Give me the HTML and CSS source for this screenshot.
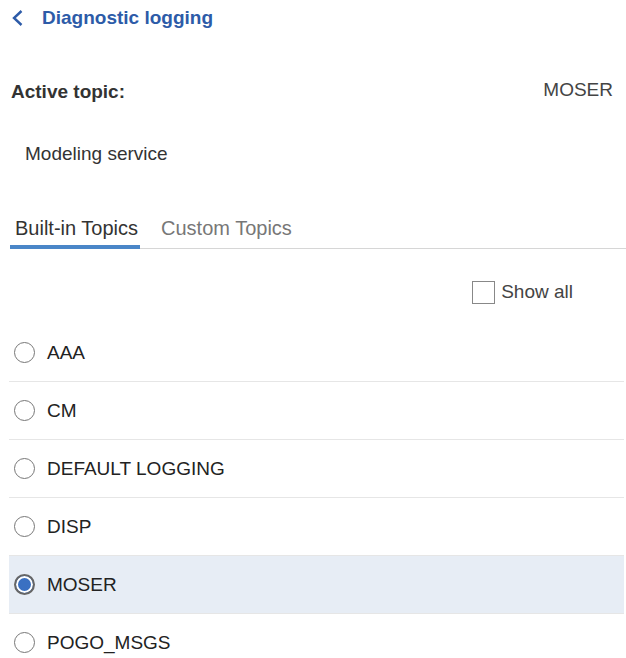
FILE: index.html
```html
<!DOCTYPE html>
<html lang="en">

<head>
    <meta charset="UTF-8">
    <meta name="viewport" content="width=device-width, initial-scale=1.0">
    <title>Diagnostic logging</title>
    <link rel="stylesheet" href="styles.css">
</head>

<body>

    <div class="header">
        <svg class="back" width="12" height="16" viewBox="0 0 12 16">
            <path d="M10.5 1 L3 8 L10.5 15" fill="none" stroke="#2d5ba8" stroke-width="2.4" />
        </svg>
        <span class="title">Diagnostic logging</span>
    </div>

    <div class="active-row">
        <span class="active-label">Active topic:</span>
        <span class="active-value">MOSER</span>
    </div>

    <div class="service">Modeling service</div>

    <div class="tabs">
        <div class="tab selected">Built-in Topics</div>
        <div class="tab">Custom Topics</div>
    </div>

    <div class="show-all">
        <span class="checkbox"></span>
        <span>Show all</span>
    </div>

    <ul class="topics" id="topics"></ul>

    <script>
        const topics = ['AAA', 'CM', 'DEFAULT LOGGING', 'DISP', 'MOSER', 'POGO_MSGS'];
        const list = document.getElementById('topics');

        topics.forEach(name => {
            const item = document.createElement('li');
            item.className = name === 'MOSER' ? 'topic selected' : 'topic';
            item.innerHTML = `<span class="radio"></span><span>${name}</span>`;
            list.appendChild(item);
        });
    </script>
</body>

</html>
```

FILE: styles.css
```css
body {
    margin: 0;
    padding: 0;
    background-color: #fff;
    color: #333;
    font-family: "Liberation Sans", Arial, sans-serif;
    font-size: 19px;
}

.header {
    display: flex;
    align-items: center;
    height: 36px;
    padding-left: 11px;
}

.back {
    margin-right: 19px;
}

.title {
    color: #2d5ba8;
    font-weight: bold;
}

.active-row {
    display: flex;
    justify-content: space-between;
    align-items: center;
    height: 40px;
    margin-top: 36px;
    padding: 0 13px 0 11px;
}

.active-label {
    font-weight: bold;
}

.active-value {
    color: #444;
    margin-top: -4px;
}

.service {
    display: flex;
    align-items: center;
    height: 40px;
    margin-top: 22px;
    padding-left: 25px;
}

.tabs {
    display: flex;
    height: 40px;
    margin-top: 34px;
    margin-left: 10px;
    border-bottom: 1px solid #d6d6d6;
}

.tab {
    display: flex;
    align-items: center;
    padding: 0 2px 0 5px;
    margin-right: 16px;
    color: #777;
    font-size: 20px;
}

.tab.selected {
    color: #333;
    box-shadow: inset 0 -4px #4a86c8;
    margin-bottom: -1px;
}

.show-all {
    display: flex;
    justify-content: flex-end;
    align-items: center;
    height: 42px;
    margin-top: 22px;
    padding-right: 53px;
    color: #444;
}

.checkbox {
    width: 21px;
    height: 21px;
    border: 1px solid #888;
    margin-right: 6px;
}

.topics {
    list-style: none;
    margin: 11px 2px 0 9px;
    padding: 0;
}

.topic {
    display: flex;
    align-items: center;
    height: 57px;
    border-bottom: 1px solid #e6e6e6;
    padding-left: 5px;
    color: #222;
}

.topic.selected {
    background-color: #e7edf5;
}

.radio {
    box-sizing: border-box;
    width: 21px;
    height: 21px;
    border: 1px solid #777;
    border-radius: 50%;
    margin-right: 12px;
    background-color: #fff;
}

.topic.selected .radio {
    border: 2px solid #666;
    background-color: #3a70c2;
    box-shadow: inset 0 0 0 2px #fff;
}
```
